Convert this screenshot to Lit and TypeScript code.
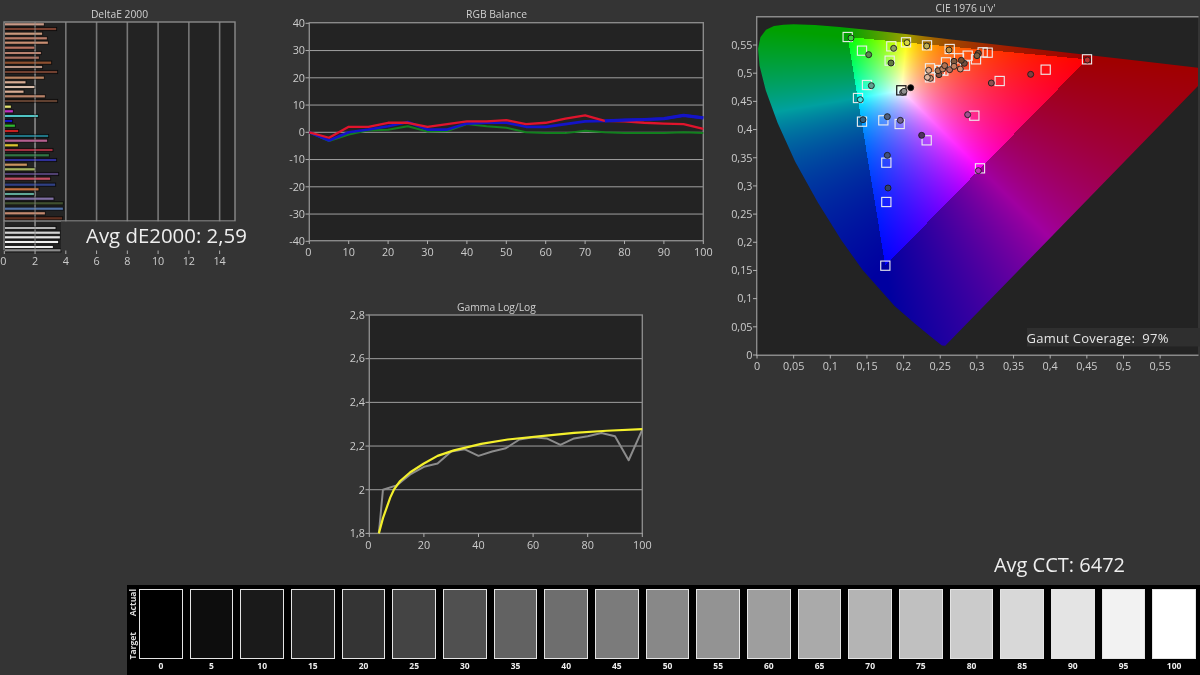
import { LitElement, html, svg, css } from "lit";
import { customElement } from "lit/decorators.js";

// ---------- data ----------
const BARS: [number, number, string][] = [
  [73,133,"#c89a88"],[87,170,"#7a4030"],[101,128,"#c8987c"],[115,142,"#b87c68"],[128,145,"#c88e72"],[143,105,"#b87260"],
  [159,124,"#b88270"],[173,118,"#a87060"],[188,155,"#8e5030"],[201,128,"#b89484"],[216,173,"#704030"],[233,133,"#b88260"],
  [247,78,"#d8ac94"],[261,105,"#d8bcaa"],[275,72,"#d8ac94"],[289,136,"#b88268"],[303,173,"#604030"],[320,34,"#e4e470"],
  [334,40,"#c030c0"],[348,115,"#50c4c4"],[363,38,"#1414c8"],[377,46,"#30b830"],[393,56,"#c42020"],[408,146,"#207484"],
  [422,143,"#b46090"],[436,55,"#dcc430"],[450,159,"#a03040"],[466,148,"#307444"],[480,170,"#303098"],[494,82,"#c89460"],
  [508,106,"#a4b460"],[522,176,"#504070"],[536,152,"#c45064"],[554,167,"#304084"],[568,117,"#c47040"],[582,103,"#60a898"],
  [596,162,"#8070a4"],[610,190,"#405030"],[626,190,"#5070a4"],[640,136,"#c48a70"],[655,188,"#603020"],[684,168,"#b4b4b4"],
  [698,181,"#d4d4d4"],[712,181,"#e4e4e4"],[726,176,"#f0f0f0"],[741,160,"#ececec"],[751,183,"#8a8a8a"],
];

const RED = [0,-2,2,2,3.5,3.5,2,3,4,4,4.5,3,3.5,5,6.2,4.2,4,3.5,3.2,3,1.3];
const GREEN = [0,-3.2,-0.8,0.7,0.9,2.2,0.3,0.5,3,2.2,1.7,0,-0.3,-0.3,0.6,0,-0.3,-0.3,-0.3,0,-0.3];
const BLUE = [0,-3,0,1,2.2,3.8,1,1,3.2,3.5,3.5,2,2,3,4,4.2,4.5,4.7,5,6.2,5.3];

const GAMMA_ACTUAL: [number, number][] = [[3.5,1.8],[5,2],[10,2.02],[15,2.07],[20,2.105],[25,2.12],[30,2.175],[35,2.185],[40,2.155],[45,2.175],[50,2.19],[55,2.23],[60,2.24],[65,2.235],[70,2.205],[75,2.235],[80,2.245],[85,2.26],[90,2.245],[95,2.135],[100,2.275]];
const GAMMA_TARGET: [number, number][] = [[3.5,1.8],[5,1.87],[7.7,1.965],[9,2],[11.3,2.04],[15,2.08],[20,2.12],[25,2.155],[31,2.18],[41,2.21],[50.7,2.23],[63,2.245],[75,2.26],[87,2.27],[100,2.277]];

const SQUARES: [number, number][] = [[353,111],[396,152],[484,139],[479,182],[528,127],[591,136],[659,147],[713,167],[738,178],[758,157],[773,158],[947,209],[809,243],[1071,178],[600,205],[648,187],[687,175],[705,197],[630,210],[640,212],[411,255],[384,294],[396,365],[460,361],[509,372],[733,347],[590,421],[469,488],[469,606],[466,797],[750,505],[600,232]];
const DOTS: [number, number, string][] = [[363,114,"#40d040"],[416,164,"#5a8a50"],[491,145,"#8aa060"],[483,189,"#607a40"],[531,128,"#d8d840"],[590,138,"#c0b050"],[657,150,"#c09040"],[745,160,"#805030"],[741,167,"#806040"],[902,223,"#804040"],[784,249,"#905050"],[1072,180,"#c03030"],[601,235,"#c09070"],[596,211,"#e0b090"],[592,232,"#e0b8a0"],[627,224,"#805040"],[624,212,"#a07050"],[638,207,"#c08060"],[644,197,"#b07050"],[659,209,"#b07060"],[672,184,"#805a40"],[672,199,"#c08060"],[691,207,"#d09070"],[703,190,"#705040"],[694,181,"#704a30"],[424,257,"#60a090"],[391,299,"#40e0e0"],[518,277,"#808080"],[522,274,"#909090"],[542,263,"#000000"],[399,359,"#306080"],[472,350,"#506080"],[511,361,"#706090"],[713,344,"#a05090"],[575,406,"#503060"],[472,466,"#405080"],[474,564,"#304070"],[745,512,"#c030c0"]];

const GRAYS = ["#000000","#0d0d0d","#1a1a1a","#282828","#343434","#444444","#505050","#626262","#6e6e6e","#7b7b7b","#888888","#939393","#9e9e9e","#aaaaaa","#b4b4b4","#c0c0c0","#cbcbcb","#d8d8d8","#e4e4e4","#f2f2f2","#ffffff"];

// spectral locus in CIE xy
const LOCUS: [number, number][] = [[.1741,.005],[.1714,.0051],[.1644,.0109],[.1566,.0177],[.144,.0297],[.1241,.0578],[.1096,.0868],[.0913,.1327],[.0687,.2007],[.0454,.295],[.0235,.4127],[.0082,.5384],[.0039,.6548],[.0139,.7502],[.0389,.812],[.0743,.8338],[.1142,.8262],[.1547,.8059],[.2296,.7543],[.3016,.6923],[.3731,.6245],[.4441,.5547],[.5125,.4866],[.5752,.4242],[.627,.3725],[.6915,.3083],[.7347,.2653]];

const CIE_X = 757, CIE_Y = 17, CIE_W = 441, CIE_H = 338;
const uToX = (u: number) => 757 + 733 * u;
const vToY = (v: number) => 355 - 563.6 * v;

// ---------- small chart helpers ----------
const label = (x: number, y: number, t: string, anchor = "middle") =>
  svg`<text class="lbl" x=${x} y=${y} text-anchor=${anchor}>${t}</text>`;
const line = (x1: number, y1: number, x2: number, y2: number, cls = "grid") =>
  svg`<line class=${cls} x1=${x1} y1=${y1} x2=${x2} y2=${y2}></line>`;
const poly = (pts: [number, number][], color: string, width: number) =>
  svg`<polyline fill="none" stroke=${color} stroke-width=${width} stroke-linejoin="round" points=${pts.map((p) => p.join(",")).join(" ")}></polyline>`;

function range(from: number, to: number, step: number): number[] {
  const out: number[] = [];
  for (let v = from; v <= to + 1e-6; v += step) out.push(v);
  return out;
}
const comma = (v: number) => String(Math.round(v * 100) / 100).replace(".", ",");

@customElement("app-root")
export class AppRoot extends LitElement {
  static styles = css`
    :host {
      display: block;
      width: 1200px;
      height: 675px;
      overflow: hidden;
      background: #343434;
      font-family: "Open Sans", "Noto Sans", sans-serif;
    }
    .page { display: flex; flex-direction: column; width: 1200px; height: 675px; }
    .upper { display: flex; height: 585px; }
    .left { width: 725px; display: flex; flex-direction: column; }
    .top-row { display: flex; height: 290px; }
    .right { width: 475px; display: flex; flex-direction: column; }
    .chart { display: block; filter: blur(0.45px); }
    .gamma { margin-left: 340px; margin-top: 5px; }
    .cie { position: relative; width: 475px; height: 380px; filter: blur(0.45px); }
    .cie-plot { position: absolute; left: 32px; top: 17px; width: 441px; height: 338px; background: #232323; }
    .cie-plot canvas { display: block; }
    .cie svg { position: absolute; inset: 0; }
    .cct {
      flex: 1;
      display: flex;
      justify-content: flex-end;
      align-items: flex-end;
      padding: 0 75px 6px 0;
      color: #eeeeee;
      font-size: 20px;
      line-height: 28px;
      filter: blur(0.3px);
    }
    .strip {
      flex: 1;
      margin-left: 127px;
      background: #000;
      display: flex;
      filter: blur(0.35px);
    }
    .side {
      width: 12px;
      flex: none;
      height: 70px;
      margin-top: 4px;
      display: flex;
      flex-direction: column;
      justify-content: space-between;
      align-items: center;
    }
    .side span {
      writing-mode: vertical-rl;
      transform: rotate(180deg);
      color: #dddddd;
      font-size: 8.5px;
      font-weight: 700;
      line-height: 10px;
    }
    .swatches {
      flex: 1;
      display: grid;
      grid-template-columns: repeat(21, 1fr);
      column-gap: 7px;
      padding: 4px 4px 0 0;
    }
    .col { display: flex; flex-direction: column; align-items: stretch; }
    .sw { height: 70px; box-sizing: border-box; border: 1.5px solid #e4e4e4; }
    .num { color: #eeeeee; font-size: 8.5px; font-weight: 700; text-align: center; line-height: 12px; margin-top: 1px; }
    .title { font-size: 10.3px; fill: #cfcfcf; text-anchor: middle; }
    .lbl { font-size: 10.8px; fill: #cccccc; }
    .grid { stroke: #a0a0a0; stroke-width: 1; }
    .vgrid { stroke: #787878; stroke-width: 1.6; }
    .frame { fill: none; stroke: #8a8a8a; stroke-width: 1.4; }
    .plot { fill: #232323; }
    .cover { fill: #343434; }
    .big { font-size: 20.400px; fill: #eeeeee; }
    .note-bg { fill: #2f2f2f; }
    .note { font-size: 13px; fill: #e6e6e6; letter-spacing: 0.25px; white-space: pre; }
    .sq { fill: none; stroke: #eeeeee; stroke-width: 1.1; }
    .sq-dark { fill: none; stroke: #111111; stroke-width: 1.2; }
    .dot { stroke: #1c1c1c; stroke-width: 0.9; }
    .tick { stroke: #b0b0b0; stroke-width: 1; }
    .over { stroke: #8c8c8c; stroke-width: 1.2; opacity: 0.65; }
  `;

  firstUpdated() {
    const canvas = this.renderRoot.querySelector("canvas") as HTMLCanvasElement;
    const ctx = canvas.getContext("2d")!;
    const off = document.createElement("canvas");
    off.width = CIE_W;
    off.height = CIE_H;
    const octx = off.getContext("2d")!;
    const img = octx.createImageData(CIE_W, CIE_H);

    const R = [0.4502, 0.5246], G = [0.1237, 0.5642], B = [0.175, 0.1585], W = [0.1974, 0.469];
    const det = (G[1] - B[1]) * (R[0] - B[0]) + (B[0] - G[0]) * (R[1] - B[1]);
    const bary = (u: number, v: number) => {
      const a = ((G[1] - B[1]) * (u - B[0]) + (B[0] - G[0]) * (v - B[1])) / det;
      const b = ((B[1] - R[1]) * (u - B[0]) + (R[0] - B[0]) * (v - B[1])) / det;
      return [a, b, 1 - a - b];
    };
    const w0 = bary(W[0], W[1]);
    for (let py = 0; py < CIE_H; py++) {
      for (let px = 0; px < CIE_W; px++) {
        const u = (px + CIE_X + 0.5 - 757) / 733;
        const v = (355 - (py + CIE_Y + 0.5)) / 563.6;
        const [a, b, c] = bary(u, v);
        const inside = a >= 0 && b >= 0 && c >= 0;
        const rgb = [Math.max(a, 0) / w0[0], Math.max(b, 0) / w0[1], Math.max(c, 0) / w0[2]];
        const m = Math.max(rgb[0], rgb[1], rgb[2], 1e-6);
        const k = inside ? 255 : 160;
        const i = (py * CIE_W + px) * 4;
        img.data[i] = Math.pow(rgb[0] / m, 0.95) * k;
        img.data[i + 1] = Math.pow(rgb[1] / m, 0.95) * k;
        img.data[i + 2] = Math.pow(rgb[2] / m, 0.95) * k;
        img.data[i + 3] = 255;
      }
    }
    octx.putImageData(img, 0, 0);

    ctx.beginPath();
    LOCUS.forEach(([x, y], i) => {
      const d = -2 * x + 12 * y + 3;
      const px = uToX((4 * x) / d) - CIE_X;
      const py = vToY((9 * y) / d) - CIE_Y;
      if (i === 0) ctx.moveTo(px, py);
      else ctx.lineTo(px, py);
    });
    ctx.closePath();
    ctx.clip();
    ctx.drawImage(off, 0, 0);
  }

  private delta() {
    const x0 = 4.3, per = 15.38;
    return html`<svg class="chart" width="270" height="290" viewBox="0 0 270 290">
      <text class="title" x="119.500" y="18">DeltaE 2000</text>
      <rect class="plot" x="4" y="22" width="231" height="228"></rect>
      ${range(2, 14, 2).map((v) => line(x0 + v * per, 22, x0 + v * per, 250, "vgrid"))}
      ${BARS.map(([y, end, c]) => svg`<rect x="4.500" y=${y / 3 - 1.6} width=${end / 3 - 4.5} height="3.200" fill=${c} stroke="#0c0c0c" stroke-width="0.9"></rect>`)}
      ${line(x0 + 2 * per, 22, x0 + 2 * per, 250, "over")}
      <rect class="frame" x="4" y="22" width="231" height="199"></rect>
      <line class="vgrid" x1="4" y1="221" x2="4" y2="250"></line>
      <rect class="cover" x="61" y="221.500" width="190" height="29"></rect>
      ${range(0, 14, 2).map((v) => line(x0 + v * per, 250.5, x0 + v * per, 254, "tick"))}
      ${range(0, 14, 2).map((v) => label(x0 + v * per - (v === 0 ? 1 : 0), 265, String(v)))}
      <text class="big" x="86" y="243">Avg dE2000: 2,59</text>
    </svg>`;
  }

  private rgb() {
    const x = (v: number) => 309.3 + 3.94 * v;
    const y = (v: number) => 132.3 - 2.725 * v;
    const series = (d: number[], from = 0) => d.map((v, i) => [x(i * 5), y(v)] as [number, number]).slice(from);
    return html`<svg class="chart" width="455" height="290" viewBox="270 0 455 290">
      <text class="title" x="496.500" y="18">RGB Balance</text>
      <rect class="plot" x="309.300" y="22.700" width="394" height="218"></rect>
      ${range(-30, 30, 10).map((v) => line(309.3, y(v), 703.3, y(v)))}
      <rect class="frame" x="309.300" y="22.700" width="394" height="218"></rect>
      ${range(-40, 40, 10).map((v) => line(305.5, y(v), 309.3, y(v), "tick"))}
      ${range(0, 100, 10).map((v) => line(x(v), 240.7, x(v), 244, "tick"))}
      ${range(-40, 40, 10).map((v) => label(305, y(v) + 3.8, String(v), "end"))}
      ${range(0, 100, 10).map((v) => label(x(v) - (v === 0 ? 1 : 0), 256, String(v)))}
      ${poly(series(GREEN), "#12801e", 2)}
      ${poly(series(BLUE), "#1414c8", 2.6)}
      ${poly(series(RED), "#e0142c", 2.3)}
      ${poly(series(BLUE, 15), "#1414c8", 3.2)}
    </svg>`;
  }

  private gammaChart() {
    const x = (v: number) => 369.3 + 2.73 * v;
    const y = (v: number) => 533.4 - 218.4 * ((v - 1.8) / 1);
    const map = (d: [number, number][]) => d.map(([a, b]) => [x(a), y(b)] as [number, number]);
    return html`<svg class="chart gamma" width="330" height="265" viewBox="340 295 330 265" >
      <text class="title" x="496.500" y="310.500">Gamma Log/Log</text>
      <rect class="plot" x="369.300" y="315" width="273" height="218.400"></rect>
      ${range(2, 2.6, 0.2).map((v) => line(369.3, y(v), 642.3, y(v)))}
      <rect class="frame" x="369.300" y="315" width="273" height="218.400"></rect>
      ${range(1.8, 2.8, 0.2).map((v) => line(365.5, y(v), 369.3, y(v), "tick"))}
      ${range(0, 100, 20).map((v) => line(x(v), 533.4, x(v), 537, "tick"))}
      ${range(1.8, 2.8, 0.2).map((v) => label(365, y(v) + 3.8, comma(v), "end"))}
      ${range(0, 100, 20).map((v) => label(x(v) - (v === 0 ? 1 : 0), 549, String(v)))}
      ${poly(map(GAMMA_ACTUAL), "#8c8c8c", 2)}
      ${poly(map(GAMMA_TARGET), "#f4f02c", 2.2)}
    </svg>`;
  }

  private cieChart() {
    const wx = 730 + 514 / 3, wy = 271 / 3;
    return html`<div class="cie">
      <div class="cie-plot"><canvas width="441" height="338"></canvas></div>
      <svg width="475" height="380" viewBox="725 0 475 380">
        <text class="title" x="965.500" y="11.500">CIE 1976 u'v'</text>
        <path class="frame" d="M1198.500 16.700 H756.700 V355.300 H1198.500"></path>
        ${range(0, 0.55, 0.05).map((v) => line(753, vToY(v), 757, vToY(v), "tick"))}
        ${range(0, 0.55, 0.05).map((v) => line(uToX(v), 355, uToX(v), 358.5, "tick"))}
        ${range(0, 0.55, 0.05).map((v) => label(752.5, vToY(v) + 3.8, comma(v), "end"))}
        ${range(0, 0.55, 0.05).map((v) => label(uToX(v), 370, comma(v)))}
        ${SQUARES.map(([a, b]) => svg`<rect class="sq" x=${730 + a / 3 - 4.6} y=${b / 3 - 4.6} width="9.200" height="9.200"></rect>`)}
        <rect class="sq-dark" x=${wx - 4.6} y=${wy - 4.6} width="9.200" height="9.200"></rect>
        ${DOTS.map(([a, b, c]) => svg`<circle class="dot" cx=${730 + a / 3} cy=${b / 3} r="3" fill=${c}></circle>`)}
        <rect class="note-bg" x="1027" y="328" width="173" height="18.500"></rect>
        <text class="note" x="1026.500" y="343">Gamut Coverage:  97%</text>
      </svg>
    </div>`;
  }

  render() {
    return html`<div class="page">
      <div class="upper">
        <div class="left">
          <div class="top-row">${this.delta()}${this.rgb()}</div>
          ${this.gammaChart()}
        </div>
        <div class="right">
          ${this.cieChart()}
          <div class="cct">Avg CCT: 6472</div>
        </div>
      </div>
      <div class="strip">
        <div class="side"><span>Actual</span><span>Target</span></div>
        <div class="swatches">
          ${GRAYS.map((g, i) => html`<div class="col"><div class="sw" style="background:${g}"></div><div class="num">${i * 5}</div></div>`)}
        </div>
      </div>
    </div>`;
  }
}
